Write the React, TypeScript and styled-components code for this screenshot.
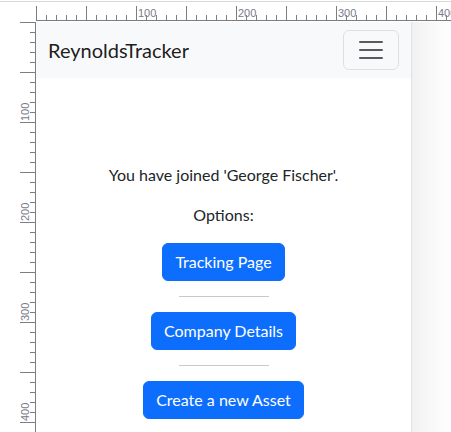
import React from "react";
import styled, { createGlobalStyle } from "styled-components";

const GlobalStyle = createGlobalStyle`
  html, body { margin: 0; padding: 0; background: #ffffff; }
  body { font-family: "Lato", "Liberation Sans", sans-serif; color: #212529; }
  * { box-sizing: border-box; }
`;

const Frame = styled.div`
  width: 451px;
  height: 432px;
  overflow: hidden;
  padding-top: 1px;
  background: #ffffff;
`;

const Workspace = styled.div`
  display: grid;
  grid-template-columns: 36px 375px 40px;
  grid-template-rows: 20px 410px;
  border-top: 1px solid #d9d9d9;
`;

const Corner = styled.div`
  background: #ffffff;
`;

const TopRulerCell = styled.div`
  grid-column: 2 / 4;
  overflow: hidden;
`;

const LeftRulerCell = styled.div`
  overflow: hidden;
`;

const Viewport = styled.div`
  overflow: hidden;
  background: #ffffff;
  display: flex;
  flex-direction: column;
`;

const Gutter = styled.div`
  border-left: 1px solid #e2e2e2;
  background: linear-gradient(to right, #f1f1f1, #fbfbfb 70%, #fefefe);
`;

const Navbar = styled.nav`
  height: 56px;
  flex: none;
  background: #f8f9fa;
  padding: 8px 12px;
  display: flex;
  align-items: center;
  justify-content: space-between;
`;

const Brand = styled.a`
  font-size: 20px;
  line-height: 30px;
  color: rgba(0, 0, 0, 0.9);
  text-decoration: none;
`;

const Toggler = styled.button`
  width: 56px;
  height: 40px;
  padding: 4px 12px;
  border: 1px solid rgba(0, 0, 0, 0.1);
  border-radius: 6px;
  background: transparent;
  display: flex;
  align-items: center;
  justify-content: center;
`;

const Main = styled.main`
  padding-top: 85px;
  display: flex;
  flex-direction: column;
  align-items: center;
  text-align: center;
  font-size: 16px;
  line-height: 24px;
`;

const Para = styled.p`
  margin: 0 0 16px;
`;

const ActionButton = styled.button`
  font-family: "Lato", "Liberation Sans", sans-serif;
  font-size: 16px;
  line-height: 24px;
  padding: 6px 12px;
  color: #ffffff;
  background: #0d6efd;
  border: 1px solid #0d6efd;
  border-radius: 6px;
`;

const Divider = styled.hr`
  width: 90px;
  margin: 15px 0;
  border: 0;
  border-top: 1px solid #c8c9ca;
`;

const TICK = "#7d7d7d";
const LABEL = "#7a7a8c";

function TopRuler() {
  const items: React.ReactNode[] = [];
  for (let v = 0; v <= 415; v += 10) {
    const x = v + 0.5;
    const major = v % 50 === 0;
    items.push(
      <line key={"t" + v} x1={x} x2={x} y1={major ? 4 : 13} y2={19} stroke={TICK} strokeWidth={1} />
    );
    if (v % 100 === 0 && v > 0) {
      items.push(
        <text key={"l" + v} x={v + 2} y={15} fontSize={11} fill={LABEL} fontFamily="Liberation Sans, sans-serif">
          {v}
        </text>
      );
    }
  }
  return (
    <svg width={415} height={20} viewBox="0 0 415 20">
      <line x1={0} x2={415} y1={18.5} y2={18.5} stroke={TICK} strokeWidth={1} />
      {items}
    </svg>
  );
}

function LeftRuler() {
  const items: React.ReactNode[] = [];
  for (let v = 0; v <= 410; v += 10) {
    const y = v + 0.5;
    const major = v % 50 === 0;
    items.push(
      <line key={"t" + v} x1={major ? 20 : 30} x2={35} y1={y} y2={y} stroke={TICK} strokeWidth={1} />
    );
    if (v % 100 === 0 && v > 0) {
      const ly = v - 1;
      items.push(
        <text
          key={"l" + v}
          x={28.5}
          y={ly}
          fontSize={11}
          fill={LABEL}
          fontFamily="Liberation Sans, sans-serif"
          transform={`rotate(-90 28.5 ${ly})`}
        >
          {v}
        </text>
      );
    }
  }
  return (
    <svg width={36} height={410} viewBox="0 0 36 410">
      <line x1={35.5} x2={35.5} y1={0} y2={410} stroke={TICK} strokeWidth={1} />
      {items}
    </svg>
  );
}

function MenuIcon() {
  return (
    <svg width={30} height={30} viewBox="0 0 30 30">
      <path d="M4 7h22M4 15h22M4 23h22" stroke="rgba(33,37,41,0.75)" strokeWidth={2} strokeLinecap="round" />
    </svg>
  );
}

export default function App() {
  return (
    <Frame>
      <GlobalStyle />
      <Workspace>
        <Corner />
        <TopRulerCell>
          <TopRuler />
        </TopRulerCell>
        <LeftRulerCell>
          <LeftRuler />
        </LeftRulerCell>
        <Viewport>
          <Navbar>
            <Brand href="#">ReynoldsTracker</Brand>
            <Toggler aria-label="Toggle navigation">
              <MenuIcon />
            </Toggler>
          </Navbar>
          <Main>
            <Para>You have joined 'George Fischer'.</Para>
            <Para>Options:</Para>
            <ActionButton>Tracking Page</ActionButton>
            <Divider />
            <ActionButton>Company Details</ActionButton>
            <Divider />
            <ActionButton>Create a new Asset</ActionButton>
          </Main>
        </Viewport>
        <Gutter />
      </Workspace>
    </Frame>
  );
}
